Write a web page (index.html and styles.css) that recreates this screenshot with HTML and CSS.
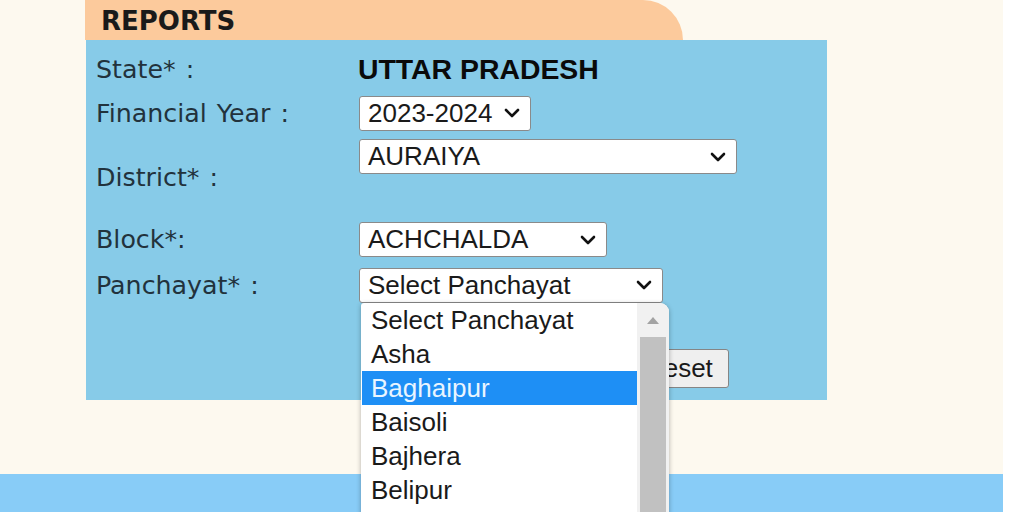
FILE: index.html
```html
<!DOCTYPE html>
<html lang="en">
<head>
<meta charset="utf-8">
<title>Reports</title>
<link rel="stylesheet" href="styles.css">
</head>
<body>
<div class="page">
  <div class="content">
    <div class="tab">REPORTS</div>
    <div class="panel">
      <div class="row row-state">
        <div class="label">State* :</div>
        <div class="state-value">UTTAR PRADESH</div>
      </div>
      <div class="row row-fy">
        <div class="label">Financial Year :</div>
        <div class="select w-fy"><span>2023-2024</span><svg class="chev" viewBox="0 0 16 10" width="16" height="10"><path d="M2 2 L8 8 L14 2" fill="none" stroke="#111" stroke-width="2.6" stroke-linecap="round" stroke-linejoin="round"/></svg></div>
      </div>
      <div class="row row-district">
        <div class="label">District* :</div>
        <div class="select w-district top"><span>AURAIYA</span><svg class="chev" viewBox="0 0 16 10" width="16" height="10"><path d="M2 2 L8 8 L14 2" fill="none" stroke="#111" stroke-width="2.6" stroke-linecap="round" stroke-linejoin="round"/></svg></div>
      </div>
      <div class="row row-block">
        <div class="label">Block*:</div>
        <div class="select w-block"><span>ACHCHALDA</span><svg class="chev" viewBox="0 0 16 10" width="16" height="10"><path d="M2 2 L8 8 L14 2" fill="none" stroke="#111" stroke-width="2.6" stroke-linecap="round" stroke-linejoin="round"/></svg></div>
      </div>
      <div class="row row-panchayat">
        <div class="label">Panchayat* :</div>
        <div class="select w-panchayat"><span>Select Panchayat</span><svg class="chev" viewBox="0 0 16 10" width="16" height="10"><path d="M2 2 L8 8 L14 2" fill="none" stroke="#111" stroke-width="2.6" stroke-linecap="round" stroke-linejoin="round"/></svg></div>
      </div>
      <div class="row row-buttons">
        <div></div>
        <div class="buttons">
          <button class="btn">Submit</button>
          <button class="btn">Reset</button>
        </div>
      </div>
    </div>
  </div>
  <div class="spacer"></div>
  <div class="footer"></div>

  <div class="dropdown">
    <div class="options">
      <div class="opt">Select Panchayat</div>
      <div class="opt">Asha</div>
      <div class="opt selected">Baghaipur</div>
      <div class="opt">Baisoli</div>
      <div class="opt">Bajhera</div>
      <div class="opt">Belipur</div>
    </div>
    <div class="scrollbar">
      <div class="arrow"></div>
      <div class="thumb"></div>
    </div>
  </div>
</div>
</body>
</html>
```

FILE: styles.css
```css
html, body {
  margin: 0;
  padding: 0;
  background: #ffffff;
}

.page {
  position: relative;
  width: 1003px;
  height: 512px;
  background: #fdf9ef;
  display: flex;
  flex-direction: column;
  overflow: hidden;
}

.content {
  padding-left: 85px;
}

.tab {
  width: 582px;
  height: 40px;
  padding-left: 16px;
  background: #fcca9c;
  border-top-right-radius: 42px;
  font-family: "DejaVu Sans", Verdana, sans-serif;
  font-weight: bold;
  font-size: 26px;
  line-height: 42px;
  color: #1a1a1a;
  box-sizing: content-box;
}

.panel {
  margin-left: 1px;
  width: 731px;
  height: 353px;
  padding: 7px 0 0 10px;
  background: #87cbe8;
}

.row {
  display: grid;
  grid-template-columns: 262px 1fr;
  align-items: center;
}

.row-state { height: 44px; }
.row-fy { height: 44px; }
.row-district { height: 84px; }
.row-block { height: 41px; }
.row-panchayat { height: 50px; }
.row-buttons { margin-top: 39px; height: 39px; }

.label {
  font-family: "DejaVu Sans", Verdana, sans-serif;
  font-size: 25.3px;
  word-spacing: 2px;
  color: #22323c;
  white-space: pre;
}

.state-value {
  font-family: "Liberation Sans", Arial, sans-serif;
  font-weight: bold;
  font-size: 28.4px;
  color: #0a0a0a;
}

.select {
  box-sizing: border-box;
  height: 35px;
  margin-left: 1px;
  background: #ffffff;
  border: 1px solid #8a8a8a;
  border-radius: 3px;
  display: flex;
  align-items: center;
  justify-content: space-between;
  padding: 0 10px 0 8px;
  font-family: "Liberation Sans", Arial, sans-serif;
  font-size: 26px;
  color: #1a1a1a;
}

.select.top { align-self: start; margin-top: 4px; }

.w-fy { width: 172px; }
.w-district { width: 378px; }
.w-block { width: 248px; }
.w-panchayat { width: 304px; }

.chev { flex: none; }

.buttons {
  display: flex;
  gap: 6px;
  padding-left: 152px;
}

.btn {
  height: 39px;
  padding: 0 15px;
  background: #efefef;
  border: 1px solid #858585;
  border-radius: 3px;
  font-family: "Liberation Sans", Arial, sans-serif;
  font-size: 26px;
  color: #1a1a1a;
}

.spacer { flex: 1; }

.footer {
  height: 38px;
  background: #88ccf7;
}

.dropdown {
  position: absolute;
  left: 361px;
  top: 303px;
  width: 308px;
  height: 230px;
  background: #ffffff;
  border-radius: 3px 9px 0 0;
  box-shadow: 0 1px 5px rgba(0, 0, 0, 0.3);
  display: flex;
  overflow: hidden;
}

.options {
  flex: 1;
  padding-top: 0;
}

.opt {
  height: 34px;
  line-height: 34px;
  padding-left: 9px;
  margin-left: 1px;
  font-family: "Liberation Sans", Arial, sans-serif;
  font-size: 26px;
  color: #1a1a1a;
}

.opt.selected {
  background: #1e8ff5;
  color: #eaf5ff;
}

.scrollbar {
  width: 32px;
  background: #f1f1f1;
  display: flex;
  flex-direction: column;
  align-items: center;
}

.arrow {
  margin-top: 14px;
  width: 0;
  height: 0;
  border-left: 6px solid transparent;
  border-right: 6px solid transparent;
  border-bottom: 7px solid #a3a3a3;
}

.thumb {
  margin-top: 13px;
  width: 26px;
  flex: 1;
  background: #c1c1c1;
}
```
